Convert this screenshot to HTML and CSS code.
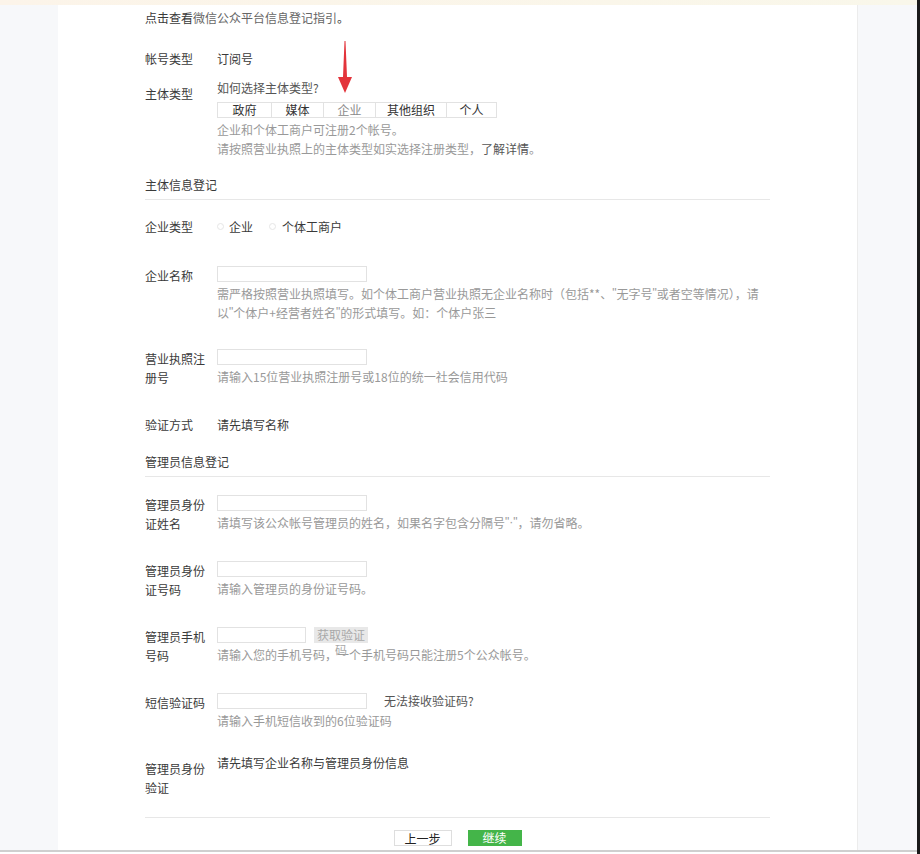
FILE: index.html
```html
<!DOCTYPE html>
<html lang="zh-CN">
<head>
<meta charset="utf-8">
<title>信息登记</title>
<link rel="stylesheet" href="styles.css">
</head>
<body>
<div class="topbar"></div>
<div class="page">
  <div class="panel">
    <svg class="arrow" width="20" height="60" viewBox="0 0 20 60">
      <polygon points="7.5,1 8.5,1 10,37 15,37 8,53 1,37 6,37" fill="#e3343b"/>
    </svg>

    <p class="intro">点击查看<span class="lnk">微信公众平台信息登记指引</span>。</p>

    <div class="row r-acct">
      <div class="label">帐号类型</div>
      <div class="value">订阅号</div>
    </div>

    <div class="row r-type">
      <div class="label low">主体类型</div>
      <div class="value">
        <div class="hint">如何选择主体类型?</div>
        <div class="seg">
          <span class="s1">政府</span><span class="s2">媒体</span><span class="s3 sel">企业</span><span class="s4">其他组织</span><span class="s5">个人</span>
        </div>
        <div class="help tight">企业和个体工商户可注册2个帐号。<br>请按照营业执照上的主体类型如实选择注册类型，<span class="dark">了解详情</span>。</div>
      </div>
    </div>

    <div class="section s-main">主体信息登记</div>

    <div class="row r-ctype">
      <div class="label">企业类型</div>
      <div class="value radios">
        <span class="radio"></span><span class="rtext">企业</span>
        <span class="radio r2"></span><span class="rtext">个体工商户</span>
      </div>
    </div>

    <div class="row r-name">
      <div class="label">企业名称</div>
      <div class="value">
        <div class="input"></div>
        <div class="help nowrap">需严格按照营业执照填写。如个体工商户营业执照无企业名称时（包括**、<span class="q">"</span>无字号<span class="q">"</span>或者空等情况），请<br>以<span class="q">"</span>个体户+经营者姓名<span class="q">"</span>的形式填写。如：个体户张三</div>
      </div>
    </div>

    <div class="row r-reg">
      <div class="label">营业执照注册号</div>
      <div class="value">
        <div class="input"></div>
        <div class="help">请输入15位营业执照注册号或18位的统一社会信用代码</div>
      </div>
    </div>

    <div class="row r-verify">
      <div class="label">验证方式</div>
      <div class="value">请先填写名称</div>
    </div>

    <div class="section s-admin">管理员信息登记</div>

    <div class="row r-a1">
      <div class="label">管理员身份证姓名</div>
      <div class="value">
        <div class="input"></div>
        <div class="help">请填写该公众帐号管理员的姓名，如果名字包含分隔号<span class="q">"·"</span>，请勿省略。</div>
      </div>
    </div>

    <div class="row r-a2">
      <div class="label">管理员身份证号码</div>
      <div class="value">
        <div class="input"></div>
        <div class="help">请输入管理员的身份证号码。</div>
      </div>
    </div>

    <div class="row r-a2">
      <div class="label">管理员手机号码</div>
      <div class="value">
        <div class="inline">
          <div class="input short"></div>
          <div class="getcode">获取验证码</div>
        </div>
        <div class="help">请输入您的手机号码，一个手机号码只能注册5个公众帐号。</div>
      </div>
    </div>

    <div class="row r-a2">
      <div class="label">短信验证码</div>
      <div class="value">
        <div class="inline">
          <div class="input"></div>
          <div class="nocode">无法接收验证码?</div>
        </div>
        <div class="help">请输入手机短信收到的6位验证码</div>
      </div>
    </div>

    <div class="row r-a5">
      <div class="label low">管理员身份验证</div>
      <div class="value">请先填写企业名称与管理员身份信息</div>
    </div>

    <div class="footer">
      <div class="btn prev">上一步</div>
      <div class="btn next">继续</div>
    </div>
  </div>
</div>
<div class="bottomline"></div>
</body>
</html>
```

FILE: styles.css
```css
* { box-sizing: border-box; }

html, body {
  margin: 0;
  padding: 0;
}

body {
  background: #f7f8fa;
  font-family: "Noto Sans CJK SC", "Noto Sans", sans-serif;
  font-size: 12px;
  line-height: 19px;
  color: #3a3a3a;
  border-right: 3px solid #1a1a1a;
  width: 920px;
  height: 854px;
  overflow: hidden;
}

.topbar {
  height: 5px;
  background: linear-gradient(90deg, #fcf4e9, #f9f7ea);
}

.page {
  height: 845px;
  padding-left: 58px;
}

.panel {
  position: relative;
  width: 800px;
  height: 845px;
  background: #fff;
  border-right: 1px solid #ececec;
  padding: 3px 87px 0 87px;
}

.arrow {
  position: absolute;
  left: 279px;
  top: 35px;
}

.intro {
  margin: 0;
  height: 19px;
  color: #3a3a3a;
}
.lnk { color: #666; }

.row {
  display: flex;
  align-items: flex-start;
}

.label {
  width: 64px;
  margin-right: 8px;
  flex-shrink: 0;
  color: #3a3a3a;
}
.label.low { padding-top: 6px; }

.value { flex: 1; color: #3a3a3a; }

.r-acct { margin-top: 22px; }
.r-type { margin-top: 10px; }
.r-ctype { margin-top: 17px; }
.r-name { margin-top: 30px; }
.r-reg { margin-top: 27px; }
.r-verify { margin-top: 28px; }
.r-a1 { margin-top: 18px; }
.r-a2 { margin-top: 28px; }
.r-a5 { margin-top: 23px; }

.hint { color: #555; }

.seg {
  display: flex;
  width: 280px;
  height: 16px;
  margin-top: 5px;
  border: 1px solid #e2e2e2;
}
.seg span {
  display: block;
  height: 14px;
  line-height: 14px;
  text-align: center;
  color: #333;
  border-left: 1px solid #e2e2e2;
}
.seg span:first-child { border-left: 0; }
.seg .s1 { width: 53px; }
.seg .s2 { width: 52px; }
.seg .s3 { width: 52px; }
.seg .s4 { width: 71px; }
.seg .s5 { width: 50px; }
.seg .sel { color: #8a8a8a; }

.help {
  margin-top: 2px;
  color: #999;
}
.help .dark { color: #555; }
.nowrap { white-space: nowrap; }
.q {
  font-family: "Liberation Sans", sans-serif;
  display: inline-block;
  vertical-align: top;
  line-height: 19px;
  height: 19px;
}

.section {
  margin-top: 17px;
  padding-bottom: 5px;
  border-bottom: 1px solid #e7e7e7;
  color: #3a3a3a;
}
.s-admin { margin-top: 18px; }

.radios {
  display: flex;
  align-items: center;
  height: 19px;
}
.radio {
  width: 7px;
  height: 7px;
  border: 1px solid #e6e6e6;
  border-radius: 50%;
  margin-right: 5px;
  flex-shrink: 0;
}
.radio.r2 { margin-left: 16px; margin-right: 6px; }
.rtext { color: #3a3a3a; }

.input {
  width: 150px;
  height: 16px;
  border: 1px solid #e2e2e2;
  background: #fff;
}
.input.short { width: 89px; }

.inline {
  display: flex;
  align-items: flex-start;
  height: 16px;
}

.getcode {
  position: relative;
  z-index: 1;
  width: 54px;
  height: 16px;
  margin-left: 8px;
  background: #e8e8e8;
  color: #a8a8a8;
  text-align: center;
  line-height: 15px;
  overflow: visible;
}

.nocode {
  margin-left: 17px;
  margin-top: -2px;
  color: #555;
}

.footer {
  margin-top: 20px;
  border-top: 1px solid #e7e7e7;
  padding-top: 12px;
  display: flex;
  justify-content: center;
  gap: 16px;
}

.btn {
  height: 16px;
  line-height: 15px;
  text-align: center;
}
.btn.prev {
  width: 58px;
  border: 1px solid #dedede;
  background: #fff;
  color: #222;
}
.btn.next {
  width: 54px;
  background: #44b549;
  color: #fff;
}

.bottomline {
  height: 4px;
  border-top: 2px solid #cfcfcf;
  background: #fff;
}
```
